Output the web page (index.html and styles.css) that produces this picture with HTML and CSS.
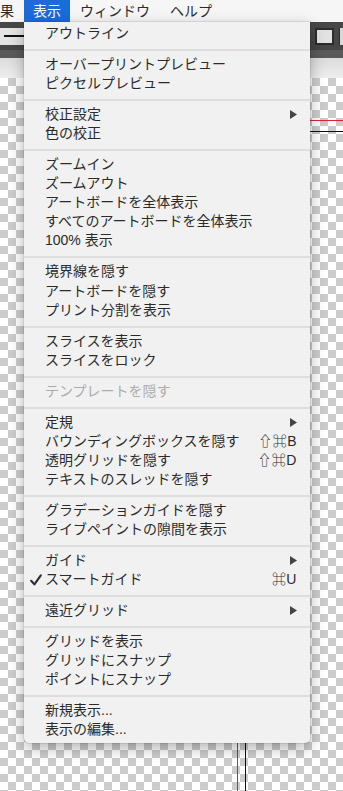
FILE: index.html
```html
<!DOCTYPE html>
<html>
<head>
  <title>表示メニュー</title>
  <link rel="stylesheet" href="styles.css">
</head>
<body>
  <div class="menubar">
    <span class="cut">果</span>
    <span class="open">表示</span>
    <span>ウィンドウ</span>
    <span>ヘルプ</span>
  </div>

  <div class="toolbar">
    <div class="stroke"></div>
    <div class="tools-right">
      <div class="grip"></div>
      <div class="swatch"></div>
      <div class="swatch-next"></div>
    </div>
  </div>
  <div class="toolbar-edge"></div>
  <div class="ruler"></div>

  <div class="canvas">
    <div class="guide red-h"></div>
    <div class="guide red-v"></div>
    <div class="guide black-h"></div>
    <div class="guide black-v"></div>
  </div>

  <div class="menu">
    <div class="item"><span class="check"></span><span class="label">アウトライン</span></div>
    <div class="sep"></div>
    <div class="item"><span class="check"></span><span class="label">オーバープリントプレビュー</span></div>
    <div class="item"><span class="check"></span><span class="label">ピクセルプレビュー</span></div>
    <div class="sep"></div>
    <div class="item"><span class="check"></span><span class="label">校正設定</span><svg class="arrow" width="7" height="9" viewBox="0 0 7 9"><polygon points="0,0 7,4.5 0,9"/></svg></div>
    <div class="item"><span class="check"></span><span class="label">色の校正</span></div>
    <div class="sep"></div>
    <div class="item"><span class="check"></span><span class="label">ズームイン</span></div>
    <div class="item"><span class="check"></span><span class="label">ズームアウト</span></div>
    <div class="item"><span class="check"></span><span class="label">アートボードを全体表示</span></div>
    <div class="item"><span class="check"></span><span class="label">すべてのアートボードを全体表示</span></div>
    <div class="item"><span class="check"></span><span class="label">100% 表示</span></div>
    <div class="sep"></div>
    <div class="item"><span class="check"></span><span class="label">境界線を隠す</span></div>
    <div class="item"><span class="check"></span><span class="label">アートボードを隠す</span></div>
    <div class="item"><span class="check"></span><span class="label">プリント分割を表示</span></div>
    <div class="sep"></div>
    <div class="item"><span class="check"></span><span class="label">スライスを表示</span></div>
    <div class="item"><span class="check"></span><span class="label">スライスをロック</span></div>
    <div class="sep"></div>
    <div class="item disabled"><span class="check"></span><span class="label">テンプレートを隠す</span></div>
    <div class="sep"></div>
    <div class="item"><span class="check"></span><span class="label">定規</span><svg class="arrow" width="7" height="9" viewBox="0 0 7 9"><polygon points="0,0 7,4.5 0,9"/></svg></div>
    <div class="item"><span class="check"></span><span class="label">バウンディングボックスを隠す</span><span class="key">⇧⌘B</span></div>
    <div class="item"><span class="check"></span><span class="label">透明グリッドを隠す</span><span class="key">⇧⌘D</span></div>
    <div class="item"><span class="check"></span><span class="label">テキストのスレッドを隠す</span></div>
    <div class="sep"></div>
    <div class="item"><span class="check"></span><span class="label">グラデーションガイドを隠す</span></div>
    <div class="item"><span class="check"></span><span class="label">ライブペイントの隙間を表示</span></div>
    <div class="sep"></div>
    <div class="item"><span class="check"></span><span class="label">ガイド</span><svg class="arrow" width="7" height="9" viewBox="0 0 7 9"><polygon points="0,0 7,4.5 0,9"/></svg></div>
    <div class="item"><span class="check"><svg width="12" height="12" viewBox="0 0 12 12"><path d="M1.2 6.8 L4.4 10.4 L10.8 1.4" fill="none" stroke="#2b2b2b" stroke-width="2.1" stroke-linecap="round" stroke-linejoin="round"/></svg></span><span class="label">スマートガイド</span><span class="key">⌘U</span></div>
    <div class="sep"></div>
    <div class="item"><span class="check"></span><span class="label">遠近グリッド</span><svg class="arrow" width="7" height="9" viewBox="0 0 7 9"><polygon points="0,0 7,4.5 0,9"/></svg></div>
    <div class="sep"></div>
    <div class="item"><span class="check"></span><span class="label">グリッドを表示</span></div>
    <div class="item"><span class="check"></span><span class="label">グリッドにスナップ</span></div>
    <div class="item"><span class="check"></span><span class="label">ポイントにスナップ</span></div>
    <div class="sep"></div>
    <div class="item"><span class="check"></span><span class="label">新規表示...</span></div>
    <div class="item"><span class="check"></span><span class="label">表示の編集...</span></div>
  </div>
</body>
</html>
```

FILE: styles.css
```css
* {
  box-sizing: border-box;
}

body {
  margin: 0;
  width: 343px;
  height: 791px;
  overflow: hidden;
  position: relative;
  display: flex;
  flex-direction: column;
  font-family: "Liberation Sans", "Noto Sans CJK JP", sans-serif;
  font-size: 14px;
  color: #2b2b2b;
  background: #fff;
}

/* menu bar */
.menubar {
  height: 22px;
  flex-shrink: 0;
  display: flex;
  line-height: 22px;
  background: #f6f6f6;
  white-space: nowrap;
}

.menubar span {
  padding: 0 10px;
}

.menubar .cut {
  padding: 0 10px 0 0;
}

.menubar .open {
  padding: 0 9px;
  background: #1d6bd8;
  color: #fff;
}

/* tool bar under the menu bar */
.toolbar {
  height: 28px;
  flex-shrink: 0;
  display: flex;
  align-items: center;
  justify-content: space-between;
  background: #474747;
}

.stroke {
  width: 24px;
  height: 17px;
  display: flex;
  align-items: center;
  padding-left: 4px;
  background: #e4e4e4;
}

.stroke::after {
  content: "";
  flex: 1;
  height: 2px;
  background: #111;
}

.tools-right {
  display: flex;
  align-items: center;
  gap: 5px;
}

.grip {
  width: 2px;
  height: 6px;
  border-top: 2px solid #9a9a9a;
  border-bottom: 2px solid #9a9a9a;
}

.swatch {
  width: 19px;
  height: 17px;
  background: #e2e2e2;
  border: 2px solid #2c2c2c;
}

.swatch-next {
  width: 4px;
  height: 17px;
  background: #d8d8d8;
  border-left: 1px solid #2c2c2c;
}

.toolbar-edge {
  height: 8px;
  flex-shrink: 0;
  background: #5a5a5a;
}

.ruler {
  height: 20px;
  flex-shrink: 0;
  background: linear-gradient(#dcdcdc, #eeeeee);
}

/* transparency grid */
.canvas {
  flex: 1;
  position: relative;
  background: repeating-conic-gradient(#cccccc 0 25%, #ffffff 0 50%) 0 0 / 16px 16px;
}

.guide {
  position: absolute;
}

.red-h {
  top: 42px;
  left: 237px;
  right: 0;
  height: 1px;
  background: #d9262c;
}

.red-v {
  top: 42px;
  left: 237px;
  bottom: 0;
  width: 1px;
  background: #d9262c;
}

.black-h {
  top: 53px;
  left: 245px;
  right: 0;
  height: 1px;
  background: #111;
}

.black-v {
  top: 53px;
  left: 245px;
  bottom: 0;
  width: 1px;
  background: #111;
}

/* dropdown */
.menu {
  position: absolute;
  top: 22px;
  left: 24px;
  width: 286px;
  padding: 2px 0 4px;
  background: #f1f1f1;
  border-radius: 0 0 5px 5px;
  box-shadow: 0 5px 16px rgba(0, 0, 0, 0.3), 0 0 0 1px rgba(0, 0, 0, 0.08);
}

.item {
  height: 19.05px;
  display: flex;
  align-items: center;
  padding: 0 13px 0 6px;
  line-height: 19px;
  white-space: nowrap;
}

.check {
  width: 15px;
  flex-shrink: 0;
  display: flex;
  align-items: center;
}

.label {
  flex: 1;
}

.key {
  letter-spacing: 0.5px;
}

.arrow {
  fill: #444;
}

.disabled {
  color: #ababab;
}

.sep {
  height: 12px;
  padding-top: 6px;
}

.sep::before {
  content: "";
  display: block;
  height: 2px;
  background: #dedede;
}
```
